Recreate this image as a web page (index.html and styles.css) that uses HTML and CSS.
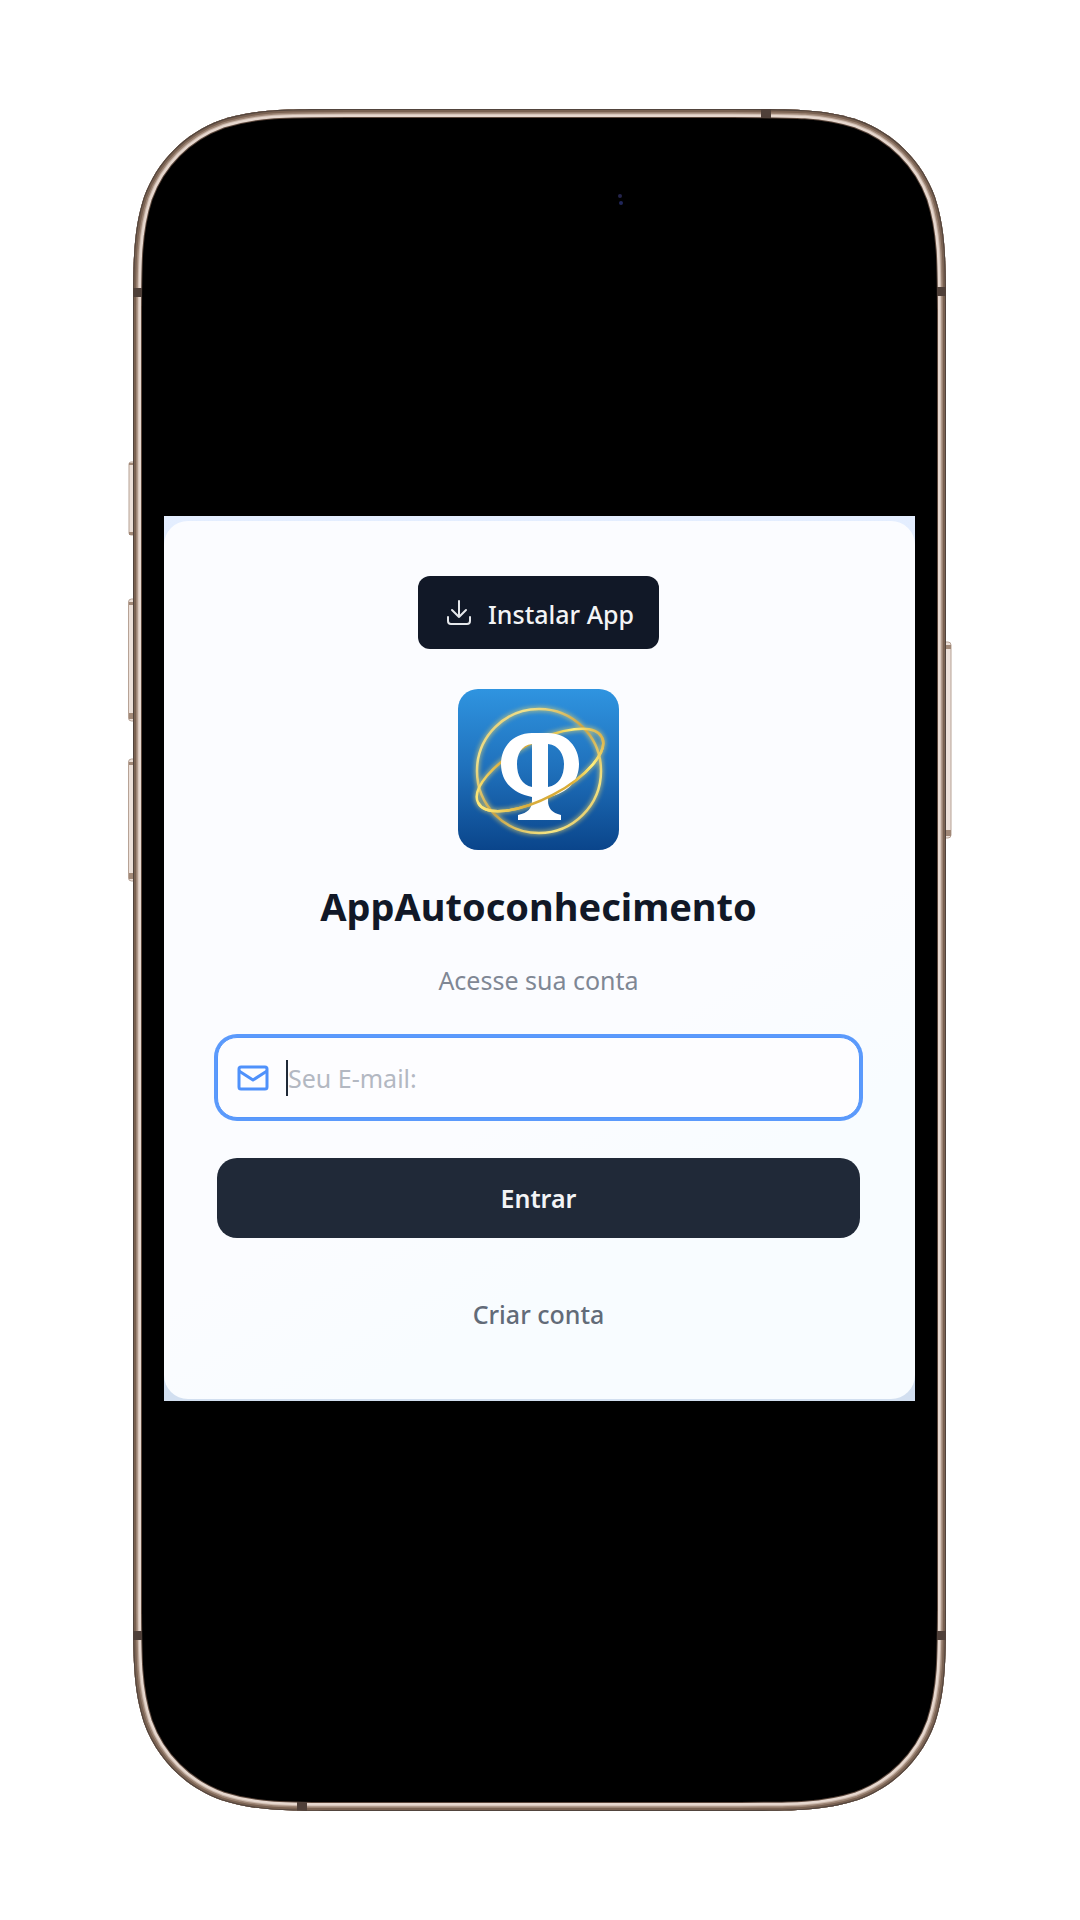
FILE: index.html
```html
<!DOCTYPE html>
<html lang="pt-BR">
<head>
  <meta charset="utf-8">
  <meta name="viewport" content="width=device-width, initial-scale=1">
  <title>AppAutoconhecimento</title>
  <link rel="stylesheet" href="styles.css">
</head>
<body>
  <main class="phone">
    <svg class="phone-frame" viewBox="0 0 824 1702" preserveAspectRatio="none" aria-hidden="true">
      <defs>
        <path id="body" d="M5 214C5 152 5 122 16 88C29 52 57 24 93 11C127 0 157 0 219 0H604C666 0 696 0 730 11C766 24 794 52 807 88C818 122 818 152 818 214V1488C818 1550 818 1580 807 1614C794 1650 766 1678 730 1691C696 1702 666 1702 604 1702H219C157 1702 127 1702 93 1691C57 1678 29 1650 16 1614C5 1580 5 1550 5 1488Z"/>
        <clipPath id="body-clip"><use href="#body"/></clipPath>
      </defs>
      <!-- side keys -->
      <g fill="#ece0d9" stroke="#b7a396">
        <rect x="1" y="353" width="8" height="73" rx="2"/>
        <rect x="0.500" y="490" width="8" height="122" rx="3"/>
        <rect x="0.500" y="650" width="8" height="122" rx="3"/>
        <rect x="814" y="533" width="9" height="196" rx="3"/>
      </g>
      <g fill="#a18877">
        <path d="M1 354h5v2H1zM1 423h5v3H1zM1 493h5v3H1zM1 604h5v6H1zM1 653h5v3H1zM1 764h5v6H1zM818 536h5v4h-5zM818 721h5v6h-5z"/>
      </g>
      <g clip-path="url(#body-clip)">
        <use href="#body" fill="#000"/>
        <g fill="none">
          <use href="#body" stroke="#5a463b" stroke-width="18"/>
          <use href="#body" stroke="#e6d7ce" stroke-width="16"/>
          <use href="#body" stroke="#c9b5a8" stroke-width="11"/>
          <use href="#body" stroke="#9c8474" stroke-width="9"/>
          <use href="#body" stroke="#7a6252" stroke-width="6"/>
          <use href="#body" stroke="#51443d" stroke-width="2"/>
        </g>
        <g fill="#4f4039">
          <path d="M5 179h9v9H5zM809 178h9v9h-9zM5 1522h9v9H5zM809 1522h9v9h-9zM633 0h10v9h-10zM169 1693h10v9h-10z"/>
        </g>
      </g>
      <circle cx="492" cy="87" r="2" fill="#24244c"/>
      <circle cx="493" cy="94" r="2" fill="#20265a"/>
    </svg>

    <section class="screen">
      <div class="card">
        <button class="install" type="button">
          <svg class="install-icon" viewBox="0 0 26 28" aria-hidden="true">
            <path d="M13 2v16M6 11l7 7 7-7M2 18v4q0 3 3 3h16q3 0 3-3v-4"/>
          </svg>
          Instalar App
        </button>

        <svg class="logo" viewBox="0 0 161 161" role="img" aria-label="Logo AppAutoconhecimento">
          <defs>
            <linearGradient id="sky" x1="0" y1="0" x2="0" y2="1">
              <stop offset="0" stop-color="#2f94e0"/>
              <stop offset="0.500" stop-color="#1f70bb"/>
              <stop offset="1" stop-color="#0a458b"/>
            </linearGradient>
            <linearGradient id="gold" x1="0" y1="0" x2="1" y2="0">
              <stop offset="0" stop-color="#ffe978"/>
              <stop offset="0.300" stop-color="#d9ad3c"/>
              <stop offset="0.650" stop-color="#d9ac35"/>
              <stop offset="0.850" stop-color="#fff07c"/>
              <stop offset="1" stop-color="#dcb650"/>
            </linearGradient>
            <linearGradient id="ring" x1="0" y1="0" x2="1" y2="1">
              <stop offset="0" stop-color="#d9b458"/>
              <stop offset="0.200" stop-color="#f0e28d"/>
              <stop offset="0.500" stop-color="#c9a346"/>
              <stop offset="0.800" stop-color="#f5e584"/>
              <stop offset="1" stop-color="#c9a346"/>
            </linearGradient>
            <filter id="glow" x="-20%" y="-20%" width="140%" height="140%">
              <feGaussianBlur stdDeviation="2"/>
            </filter>
          </defs>
          <rect width="161" height="161" rx="20" fill="url(#sky)"/>
          <g fill="none" stroke="#e3d06c" stroke-width="5" opacity="0.600" filter="url(#glow)">
            <circle cx="81" cy="82" r="62"/>
            <ellipse cx="82" cy="81" rx="70" ry="28" transform="rotate(-28 82 81)"/>
          </g>
          <circle cx="81" cy="82" r="62" fill="none" stroke="url(#ring)" stroke-width="2.500"/>
          <ellipse cx="82" cy="81" rx="70" ry="28" transform="rotate(-28 82 81)" fill="none" stroke="url(#gold)" stroke-width="2.500"/>
          <path fill="#fff" fill-rule="evenodd" d="M74 44H90C109 44 121 58 121 75C121 92 110 104 90 108V112C90 119 94 124 103 126V131H60V126C70 124 74 119 74 112V108C54 104 43 92 43 75C43 58 55 44 74 44ZM74 55C63 56 59 66 59 75C59 87 64 96 74 98ZM90 55V98C101 96 106 87 106 75C106 66 101 56 90 55Z"/>
          <path d="M12 81A70 28 0 0 0 152 81" transform="rotate(-28 82 81)" fill="none" stroke="url(#gold)" stroke-width="2.500"/>
        </svg>

        <h1 class="title">AppAutoconhecimento</h1>
        <p class="subtitle">Acesse sua conta</p>

        <form class="form">
          <label class="field">
            <svg class="mail-icon" viewBox="0 0 32 26" aria-hidden="true">
              <rect x="2" y="2" width="28" height="22" rx="2"/>
              <path d="M2 6l14 9 14-9"/>
            </svg>
            <span class="caret"></span>
            <input class="email" type="email" placeholder="Seu E-mail:" aria-label="Seu E-mail">
          </label>
          <button class="submit" type="submit">Entrar</button>
        </form>

        <a class="signup" href="#criar-conta">Criar conta</a>
      </div>
    </section>
  </main>
</body>
</html>
```
FILE: styles.css
```css
* {
  box-sizing: border-box;
}

body {
  margin: 0;
  padding: 109px 128px;
  background: #fff;
  color: #111827;
  font-family: "Noto Sans", "Open Sans", sans-serif;
  font-size: 25px;
  line-height: 32px;
}

.phone {
  position: relative;
  display: flex;
  flex-direction: column;
  justify-content: center;
  aspect-ratio: 824 / 1702;
  padding: 0 37px 3px 36px;
}

.phone-frame {
  position: absolute;
  inset: 0;
  width: 100%;
  height: 100%;
  overflow: visible;
}

.screen {
  position: relative;
  padding: 5px 0 2px;
  background: linear-gradient(#e4eeff, #d2dff0);
}

.card {
  display: flex;
  flex-direction: column;
  align-items: center;
  padding: 55px 55px 69px 53px;
  border-radius: 24px;
  background: linear-gradient(150deg, #fbfcff 60%, #f8fcff 75%);
}

button {
  border: 0;
  color: #f3f4f6;
  font: inherit;
}

.install {
  display: flex;
  align-items: center;
  gap: 16px;
  height: 73px;
  padding: 2px 25px 0 28px;
  border-radius: 12px;
  background: #111827;
  font-weight: 500;
}

.install-icon {
  width: 26px;
  height: 28px;
  margin-bottom: 2px;
  fill: none;
  stroke: #e5e7eb;
  stroke-width: 2;
  stroke-linecap: round;
  stroke-linejoin: round;
}

.logo {
  width: 161px;
  height: 161px;
  margin: 40px 0 32px;
}

.title {
  margin: 0 0 34px;
  font-size: 38px;
  font-weight: 700;
  line-height: 48px;
}

.subtitle {
  margin: 0 0 41px;
  color: #7f8794;
}

.form {
  display: flex;
  flex-direction: column;
  align-self: stretch;
  gap: 40px;
}

.field {
  display: flex;
  align-items: center;
  height: 81px;
  padding: 0 19px;
  border: 1px solid #5596fb;
  border-radius: 20px;
  background: #fdfdff;
  box-shadow: 0 0 0 3px #5b9afc;
}

.mail-icon {
  width: 32px;
  height: 26px;
  margin-right: 17px;
  fill: none;
  stroke: #4f91fb;
  stroke-width: 3;
  stroke-linejoin: round;
}

.caret {
  width: 2px;
  height: 36px;
  background: #1f2937;
}

.email {
  flex: 1;
  min-width: 0;
  padding: 0;
  border: 0;
  outline: 0;
  background: transparent;
  color: #111827;
  font: inherit;
}

.email::placeholder {
  color: #b3b8c2;
  opacity: 1;
}

.submit {
  height: 80px;
  border-radius: 20px;
  background: #202938;
  font-weight: 600;
}

.signup {
  margin-top: 60px;
  color: #626b78;
  font-weight: 500;
  text-decoration: none;
}
```
